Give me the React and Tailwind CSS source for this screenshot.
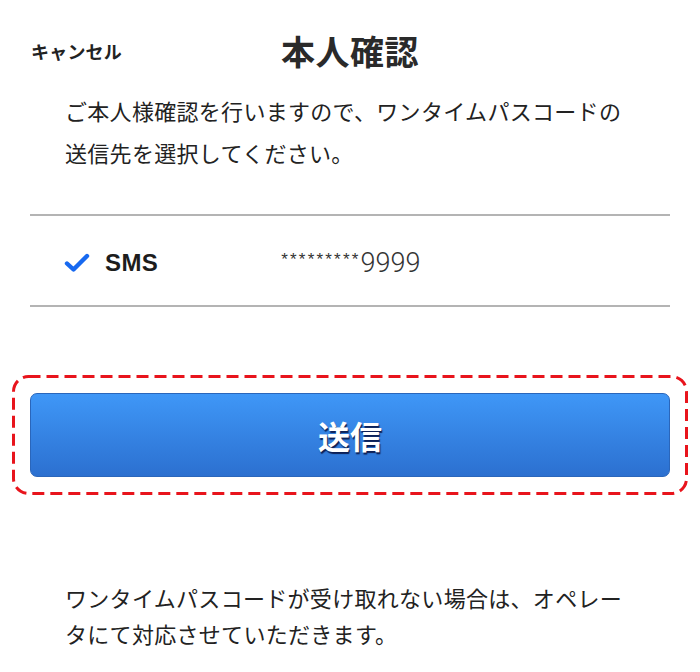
export default function App() {
  const jp = { fontFamily: '"Noto Sans CJK JP", "Noto Sans", sans-serif' };
  return (
    <div className="w-[700px] h-[672px] bg-white text-[#222] overflow-hidden" style={jp}>
      <div className="relative h-[90px] flex items-center justify-center">
        <div className="absolute left-[31px] top-[39px] text-[18px] font-bold leading-[24px] tracking-[0.2px]">キャンセル</div>
        <div className="mt-[12px] text-[34px] font-bold leading-[40px] tracking-[0.5px] text-[#2a2a2a]">本人確認</div>
      </div>
      <p className="pl-[65px] text-[22px] leading-[42px] tracking-[0.3px] text-[#222] -mt-[1px]">
        ご本人様確認を行いますので、ワンタイムパスコードの<br />送信先を選択してください。
      </p>
      <div className="mx-[30px] mt-[41px] border-t-2 border-b-2 border-[#b4b4b4] h-[93px] pt-[5px] flex items-center">
        <svg className="ml-[34px] w-[26px] h-[20px]" viewBox="0 0 26 20">
          <path d="M3 10.5 L9.5 16.5 L23 3" fill="none" stroke="#1769f0" strokeWidth="4.4" strokeLinecap="round" strokeLinejoin="round" />
        </svg>
        <span className="ml-[15px] text-[24px] font-semibold text-[#1d1d1d] tracking-[0.4px]" style={{ fontFamily: '"Liberation Sans", Arial, sans-serif' }}>SMS</span>
        <span className="ml-[123px] text-[27px] font-light text-[#333] flex items-baseline" style={{ fontFamily: 'Roboto, "Liberation Sans", sans-serif' }}>
          <span className="text-[17px] relative -top-[7px] tracking-[2.2px]" style={{ fontFamily: '"Liberation Sans", Arial, sans-serif' }}>*********</span>
          <span>9999</span>
        </span>
      </div>
      <div className="relative mx-[12px] mt-[68px] h-[120px] px-[18px] py-[18px]">
        <svg className="absolute inset-0 w-full h-full" viewBox="0 0 676 120" preserveAspectRatio="none">
          <rect x="1.5" y="1.5" width="673" height="117" rx="15" ry="15" fill="none" stroke="#e8141c" strokeWidth="3" strokeDasharray="12 6" />
        </svg>
        <div className="h-[84px] rounded-[7px] border border-[#2a66bb] bg-gradient-to-b from-[#3f97f7] to-[#2c70d0] flex items-center justify-center">
          <span className="text-[32px] font-bold text-white" style={{ textShadow: '1px 2px 1px rgba(0,0,40,0.75)' }}>送信</span>
        </div>
      </div>
      <p className="pl-[65px] mt-[84px] text-[22px] leading-[36px] tracking-[0.3px] text-[#222]">
        ワンタイムパスコードが受け取れない場合は、オペレー<br />タにて対応させていただきます。
      </p>
    </div>
  );
}
